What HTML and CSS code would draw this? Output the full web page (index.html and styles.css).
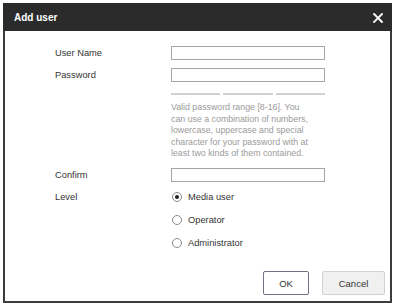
FILE: index.html
```html
<!DOCTYPE html>
<html>
<head>
<meta charset="utf-8">
<link rel="stylesheet" href="styles.css">
</head>
<body>
<div class="dialog">
  <div class="header">
    <span class="title">Add user</span>
    <svg class="close" width="10" height="10" viewBox="0 0 10 10"><path d="M1 1L9 9M9 1L1 9" stroke="#fff" stroke-width="1.9" stroke-linecap="square"/></svg>
  </div>
  <div class="body">
    <div class="form">
      <div class="label">User Name</div>
      <div class="field"><div class="input"></div></div>
      <div class="label">Password</div>
      <div class="field"><div class="input"></div></div>
      <div></div>
      <div class="bars"><span></span><span></span><span></span></div>
      <div></div>
      <div class="help">Valid password range [8-16]. You can use a combination of numbers, lowercase, uppercase and special character for your password with at least two kinds of them contained.</div>
      <div class="label">Confirm</div>
      <div class="field"><div class="input"></div></div>
      <div class="label">Level</div>
      <div class="radios">
        <div class="radio"><span class="dot checked"></span>Media user</div>
        <div class="radio"><span class="dot"></span>Operator</div>
        <div class="radio"><span class="dot"></span>Administrator</div>
      </div>
    </div>
    <div class="footer">
      <button class="btn ok">OK</button>
      <button class="btn cancel">Cancel</button>
    </div>
  </div>
</div>
</body>
</html>
```

FILE: styles.css
```css
html, body {
  margin: 0;
  padding: 0;
  background: #fff;
}
body {
  font-family: "Liberation Sans", Arial, sans-serif;
  color: #333;
}
.dialog {
  box-sizing: border-box;
  margin: 3px 0 0 3px;
  width: 389px;
  height: 300px;
  border: 2px solid #3c3c3c;
  border-top: 0;
  display: flex;
  flex-direction: column;
}
.header {
  height: 28px;
  margin: 0 -2px;
  background: #2b2b2b;
  display: flex;
  align-items: center;
  justify-content: space-between;
  padding: 0 9px 0 11px;
}
.title {
  color: #fff;
  font-weight: bold;
  font-size: 10px;
  padding-top: 1px;
}
.close {
  display: block;
  margin-top: 1px;
}
.body {
  flex: 1;
  display: flex;
  flex-direction: column;
  padding: 15px 5px 6px 50px;
}
.form {
  display: grid;
  grid-template-columns: 116px 154px;
  row-gap: 8px;
  font-size: 9.3px;
}
.label {
  height: 14px;
  line-height: 14px;
  color: #333;
}
.field {
  height: 14px;
}
.input {
  box-sizing: border-box;
  height: 14px;
  width: 154px;
  border: 1px solid #a5a5a5;
  background: #fff;
}
.bars {
  display: flex;
  gap: 3px;
  margin-top: 3px;
  height: 2px;
}
.bars span {
  flex: 1;
  background: #d0d0d0;
}
.help {
  grid-column: 2;
  color: #9a9a9a;
  font-size: 8.8px;
  line-height: 11.5px;
  margin-top: -1px;
  width: 143px;
}
.radios {
  display: flex;
  flex-direction: column;
  gap: 9px;
}
.radio {
  height: 14px;
  line-height: 14px;
  display: flex;
  align-items: center;
  color: #333;
}
.dot {
  box-sizing: border-box;
  width: 10px;
  height: 10px;
  border: 1px solid #8a8a8a;
  border-radius: 50%;
  margin: 0 6px 0 1px;
  background: #fff;
  display: flex;
  align-items: center;
  justify-content: center;
}
.dot.checked::after {
  content: "";
  width: 4px;
  height: 4px;
  border-radius: 50%;
  background: #222;
}
.footer {
  margin-top: auto;
  display: flex;
  justify-content: flex-end;
  gap: 13px;
}
.btn {
  box-sizing: border-box;
  height: 24px;
  font-family: "Liberation Sans", Arial, sans-serif;
  font-size: 9.5px;
  color: #333;
  border-radius: 2px;
  padding: 0;
}
.ok {
  width: 46px;
  background: #fff;
  border: 1px solid #6d7381;
}
.cancel {
  width: 63px;
  background: #f0f0f0;
  border: 1px solid #d2d2d2;
}
```
